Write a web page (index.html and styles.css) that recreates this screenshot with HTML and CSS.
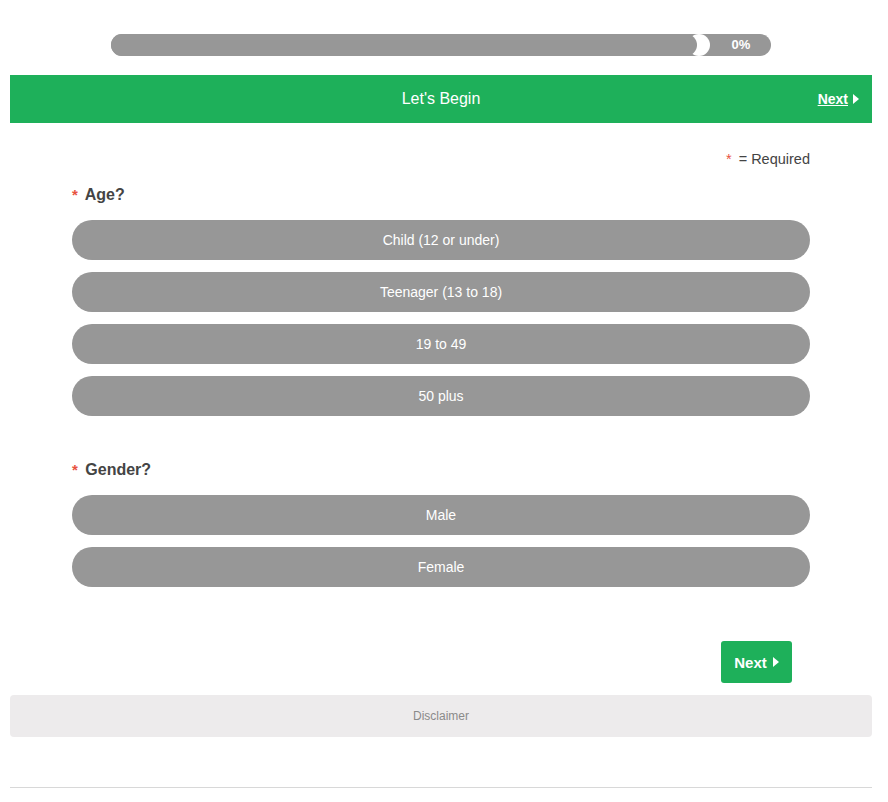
FILE: index.html
```html
<!DOCTYPE html>
<html>
<head>
<meta charset="utf-8">
<link rel="stylesheet" href="styles.css">
</head>
<body>
<div class="progress-wrap">
  <div class="progress">
    <div class="progress-fill"></div>
    <div class="progress-knob"></div>
    <div class="progress-label">0%</div>
  </div>
</div>
<div class="header">
  <div class="header-title">Let's Begin</div>
  <a class="header-next" href="#">Next</a><span class="tri tri-sm"></span>
</div>
<div class="content">
  <div class="required-note"><span class="star">*</span> = Required</div>
  <div class="question">
    <div class="q-label"><span class="star">*</span> Age?</div>
    <div class="options">
      <div class="option">Child (12 or under)</div>
      <div class="option">Teenager (13 to 18)</div>
      <div class="option">19 to 49</div>
      <div class="option">50 plus</div>
    </div>
  </div>
  <div class="question q2">
    <div class="q-label"><span class="star">*</span> Gender?</div>
    <div class="options">
      <div class="option">Male</div>
      <div class="option">Female</div>
    </div>
  </div>
  <div class="actions">
    <div class="next-btn">Next <span class="tri"></span></div>
  </div>
</div>
<div class="disclaimer">Disclaimer</div>
<div class="bottom-line"></div>
</body>
</html>
```
FILE: styles.css
```css
html, body {
  margin: 0;
  padding: 0;
  background: #fff;
}
body {
  padding: 0 16px 0 10px;
  font-family: "Liberation Sans", Arial, sans-serif;
  color: #444;
}
.progress-wrap {
  display: flex;
  justify-content: center;
  align-items: flex-start;
  padding-top: 34px;
  height: 75px;
  box-sizing: border-box;
}
.progress {
  position: relative;
  width: 660px;
  height: 22px;
  background: #979797;
  border-radius: 11px;
}
.progress-fill {
  position: absolute;
  left: 0;
  top: 0;
  width: 586px;
  height: 22px;
  background: #979797;
  border-radius: 11px;
  z-index: 2;
}
.progress-knob {
  position: absolute;
  left: 577px;
  top: 0;
  width: 22px;
  height: 22px;
  border-radius: 50%;
  background: #fff;
  z-index: 1;
}
.progress-label {
  position: absolute;
  right: 0;
  top: 0;
  width: 60px;
  height: 22px;
  line-height: 22px;
  text-align: center;
  color: #fff;
  font-size: 13px;
  font-weight: bold;
}
.header {
  position: relative;
  height: 48px;
  background: #1eb05a;
  display: flex;
  align-items: center;
  justify-content: center;
}
.header-title {
  color: #fff;
  font-size: 16px;
}
.header-next {
  position: absolute;
  right: 24px;
  top: 16px;
  color: #fff;
  font-size: 14px;
  font-weight: bold;
  text-decoration: underline;
  line-height: 16px;
}
.tri {
  display: inline-block;
  width: 0;
  height: 0;
  border-top: 5px solid transparent;
  border-bottom: 5px solid transparent;
  border-left: 6px solid #fff;
  vertical-align: 0px;
  margin-left: 2px;
}
.tri-sm {
  position: absolute;
  right: 13px;
  top: 19px;
}
.content {
  padding: 28px 62px 0 62px;
}
.required-note {
  text-align: right;
  font-size: 14.5px;
  color: #444;
  line-height: 16px;
}
.required-note .star {
  margin-right: 3px;
}
.star {
  color: #e8533f;
}
.q-label {
  margin-top: 19px;
  font-size: 16px;
  font-weight: bold;
  line-height: 18px;
  color: #444;
}
.q-label .star {
  font-size: 15px;
  margin-right: 3px;
}
.options {
  margin-top: 16px;
  display: flex;
  flex-direction: column;
  gap: 12px;
}
.option {
  height: 40px;
  border-radius: 20px;
  background: #979797;
  color: #fff;
  font-size: 14px;
  display: flex;
  align-items: center;
  justify-content: center;
}
.q2 .q-label {
  margin-top: 45px;
}
.actions {
  display: flex;
  justify-content: flex-end;
  padding-right: 18px;
  margin-top: 54px;
}
.next-btn {
  width: 71px;
  height: 42px;
  background: #1eb05a;
  border-radius: 3px;
  color: #fff;
  font-weight: bold;
  font-size: 15px;
  display: flex;
  align-items: center;
  justify-content: center;
  box-sizing: border-box;
}
.next-btn .tri {
  margin-left: 6px;
}
.disclaimer {
  margin-top: 12px;
  height: 42px;
  background: #edebec;
  border-radius: 4px;
  color: #8a8a8a;
  font-size: 12px;
  display: flex;
  align-items: center;
  justify-content: center;
}
.bottom-line {
  margin-top: 50px;
  height: 1px;
  background: #d8d8d8;
}
```
